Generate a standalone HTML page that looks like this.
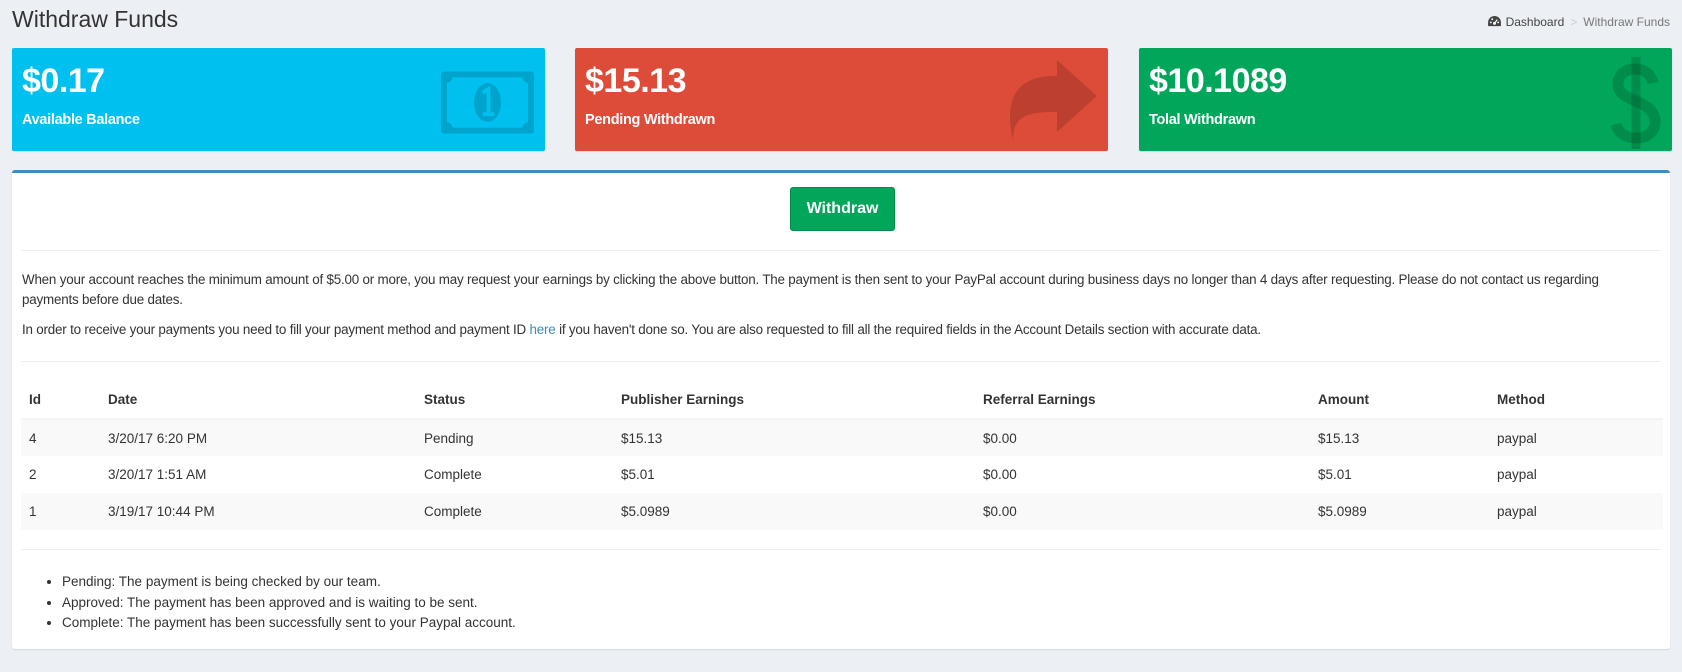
<!DOCTYPE html>
<html><head><meta charset="utf-8"><style>
*{box-sizing:border-box;margin:0;padding:0}
body{width:1682px;height:672px;background:#ecf0f5;font-family:"Liberation Sans",sans-serif;color:#333;position:relative;overflow:hidden;font-size:13.5px}
.title{position:absolute;left:12px;top:6px;font-size:23px;color:#333}
.bc{position:absolute;right:12px;top:15px;font-size:12px;color:#444}
.bc .sep{color:#ccc;margin:0 6px}
.bc .act{color:#777}
.box{position:absolute;top:48px;height:103px;width:533px;border-radius:2px;color:#fff;overflow:hidden;box-shadow:0 1px 1px rgba(0,0,0,.1)}
.box .n{position:absolute;left:10px;top:14px;font-size:34px;font-weight:bold;letter-spacing:-0.5px}
.box .l{position:absolute;left:10px;top:64px;font-size:14.5px;font-weight:bold;letter-spacing:-0.3px}
.box svg{position:absolute}
.panel{position:absolute;left:12px;top:170px;width:1658px;height:479px;background:#fff;border-top:3px solid #3c8dbc;border-radius:3px;box-shadow:0 1px 1px rgba(0,0,0,.1)}
.btn{position:absolute;left:778px;top:14px;width:105px;height:44px;background:#00a65a;border:1px solid #008d4c;border-radius:3px;color:#fff;font-size:16px;font-weight:bold;text-align:center;line-height:42px}
.hr{position:absolute;left:9px;right:9px;height:1px;background:#eee}
p{position:absolute;left:10px;right:60px;line-height:20px;letter-spacing:-0.2px;font-size:13.4px}
p a{color:#3c8dbc;text-decoration:none}
table{position:absolute;left:9px;top:208px;width:1642px;border-collapse:collapse}
td,th{text-align:left;padding:0 8px;height:37px;font-size:13.5px}
th{font-weight:bold;height:38px;border-bottom:2px solid #f4f4f4}
tr.s td{background:#f9f9f9}
ul{position:absolute;left:62px;top:572px;line-height:20.5px;font-size:13.5px}
</style></head><body>
<div class="title">Withdraw Funds</div>
<div class="bc"><svg width="13" height="11" viewBox="0 0 14 12" style="vertical-align:-1px;margin-right:5px"><path d="M7 0A7 7 0 0 0 0 7v4h14V7A7 7 0 0 0 7 0z" fill="#444"/><circle cx="7" cy="8" r="1.6" fill="#fff"/><path d="M7 8l3-4" stroke="#fff" stroke-width="1.3"/><circle cx="3" cy="7" r="1" fill="#fff"/><circle cx="11" cy="7" r="1" fill="#fff"/><circle cx="4.5" cy="3.5" r="1" fill="#fff"/></svg>Dashboard<span class="sep">&gt;</span><span class="act">Withdraw Funds</span></div>

<div class="box" style="left:12px;background:#00c0ef">
<div class="n">$0.17</div><div class="l">Available Balance</div>
<svg style="left:429px;top:23px" width="93" height="63" viewBox="0 0 96 64"><rect x="0" y="0" width="96" height="64" rx="3" fill="rgba(0,0,0,.15)"/><path d="M12 6h72a8 8 0 0 0 6 6v40a8 8 0 0 0-6 6H12a8 8 0 0 0-6-6V12a8 8 0 0 0 6-6z" fill="#00c0ef"/><ellipse cx="48" cy="32" rx="14" ry="20" fill="rgba(0,0,0,.15)"/><path d="M43 22l6-4v26M43 44h12" stroke="#00c0ef" stroke-width="4" fill="none"/></svg>
</div>
<div class="box" style="left:575px;background:#dd4b39">
<div class="n">$15.13</div><div class="l">Pending Withdrawn</div>
<svg style="left:430px;top:8px" width="96" height="86" viewBox="0 0 96 86"><path d="M8 84C0 50 6 20 50 20h2V4l40 36-40 36V56h-4C20 56 8 62 8 84z" fill="rgba(0,0,0,.15)"/></svg>
</div>
<div class="box" style="left:1139px;background:#00a65a">
<div class="n">$10.1089</div><div class="l">Tolal Withdrawn</div>
<svg style="left:472px;top:9px" width="50" height="92" viewBox="0 0 50 92"><path d="M25 0v92" stroke="rgba(0,0,0,.15)" stroke-width="9"/><path d="M42 26C40 16 32 12 24 12 14 12 7 18 7 27c0 20 37 14 37 38 0 10-8 16-19 16-10 0-18-5-20-14" stroke="rgba(0,0,0,.15)" stroke-width="11" fill="none"/></svg>
</div>

<div class="panel">
<div class="btn">Withdraw</div>
<div class="hr" style="top:77px"></div>
<p style="top:97px">When your account reaches the minimum amount of $5.00 or more, you may request your earnings by clicking the above button. The payment is then sent to your PayPal account during business days no longer than 4 days after requesting. Please do not contact us regarding payments before due dates.</p>
<p style="top:147px">In order to receive your payments you need to fill your payment method and payment ID <a>here</a> if you haven't done so. You are also requested to fill all the required fields in the Account Details section with accurate data.</p>
<div class="hr" style="top:188px"></div>
<table>
<tr><th style="width:79px">Id</th><th style="width:316px">Date</th><th style="width:197px">Status</th><th style="width:362px">Publisher Earnings</th><th style="width:335px">Referral Earnings</th><th style="width:179px">Amount</th><th>Method</th></tr>
<tr class="s"><td>4</td><td>3/20/17 6:20 PM</td><td>Pending</td><td>$15.13</td><td>$0.00</td><td>$15.13</td><td>paypal</td></tr>
<tr><td>2</td><td>3/20/17 1:51 AM</td><td>Complete</td><td>$5.01</td><td>$0.00</td><td>$5.01</td><td>paypal</td></tr>
<tr class="s"><td>1</td><td>3/19/17 10:44 PM</td><td>Complete</td><td>$5.0989</td><td>$0.00</td><td>$5.0989</td><td>paypal</td></tr>
</table>
<div class="hr" style="top:376px"></div>
</div>
<ul>
<li>Pending: The payment is being checked by our team.</li>
<li>Approved: The payment has been approved and is waiting to be sent.</li>
<li>Complete: The payment has been successfully sent to your Paypal account.</li>
</ul>
</body></html>
